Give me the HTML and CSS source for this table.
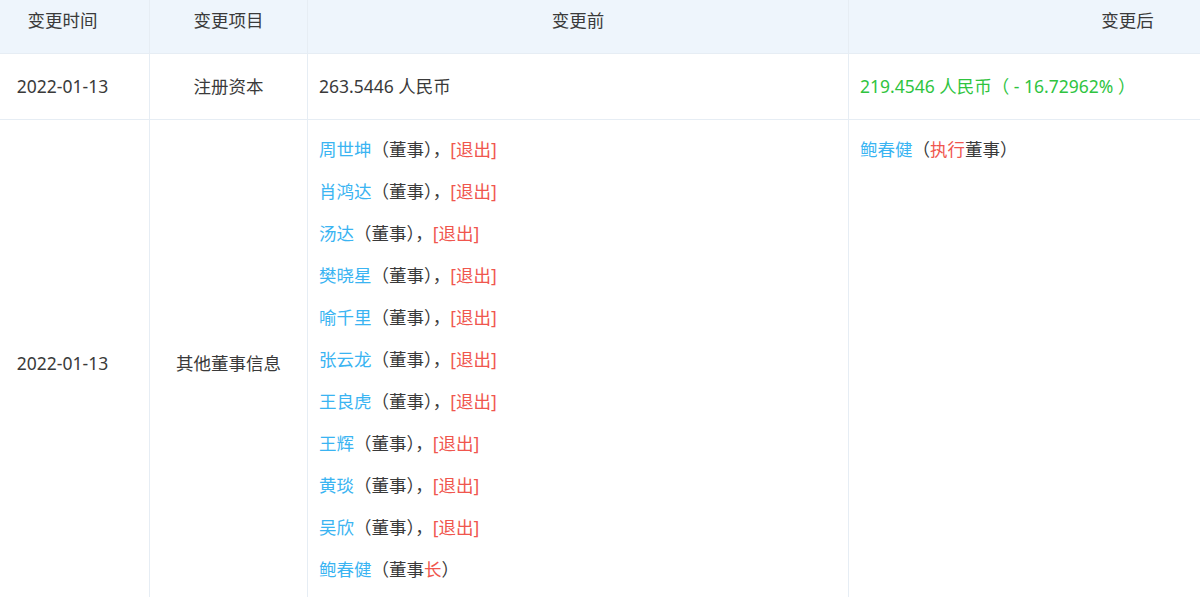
FILE: index.html
```html
<!DOCTYPE html>
<html lang="zh-CN">
<head>
<meta charset="utf-8">
<title>变更记录</title>
<link rel="stylesheet" href="styles.css">
</head>
<body>
<div class="viewport">
  <table class="changes">
    <colgroup>
      <col class="c-time">
      <col class="c-item">
      <col class="c-before">
      <col class="c-after">
    </colgroup>
    <thead>
      <tr>
        <th>变更时间</th>
        <th>变更项目</th>
        <th>变更前</th>
        <th>变更后</th>
      </tr>
    </thead>
    <tbody>
      <tr>
        <td class="mid">2022-01-13</td>
        <td class="mid">注册资本</td>
        <td class="txt">263.5446 人民币</td>
        <td class="txt green">219.4546 人民币（ - 16.72962% ）</td>
      </tr>
      <tr>
        <td class="mid">2022-01-13</td>
        <td class="mid">其他董事信息</td>
        <td class="txt list">
          <div class="line"><span class="name">周世坤</span>（董事），<span class="red">[退出]</span></div>
          <div class="line"><span class="name">肖鸿达</span>（董事），<span class="red">[退出]</span></div>
          <div class="line"><span class="name">汤达</span>（董事），<span class="red">[退出]</span></div>
          <div class="line"><span class="name">樊晓星</span>（董事），<span class="red">[退出]</span></div>
          <div class="line"><span class="name">喻千里</span>（董事），<span class="red">[退出]</span></div>
          <div class="line"><span class="name">张云龙</span>（董事），<span class="red">[退出]</span></div>
          <div class="line"><span class="name">王良虎</span>（董事），<span class="red">[退出]</span></div>
          <div class="line"><span class="name">王辉</span>（董事），<span class="red">[退出]</span></div>
          <div class="line"><span class="name">黄琰</span>（董事），<span class="red">[退出]</span></div>
          <div class="line"><span class="name">吴欣</span>（董事），<span class="red">[退出]</span></div>
          <div class="line"><span class="name">鲍春健</span>（董事<span class="red">长</span>）</div>
        </td>
        <td class="txt list">
          <div class="line"><span class="name">鲍春健</span>（<span class="red">执行</span>董事）</div>
        </td>
      </tr>
    </tbody>
  </table>
</div>
</body>
</html>
```

FILE: styles.css
```css
html, body {
  margin: 0;
  padding: 0;
  background: #ffffff;
}

.viewport {
  width: 1200px;
  height: 597px;
  overflow: hidden;
}

.changes {
  border-collapse: collapse;
  table-layout: fixed;
  width: 1431px;
  margin: -11px 0 0 -25px;
  font-family: "Noto Sans", "Noto Sans CJK SC", sans-serif;
  font-size: 17.5px;
  color: #3a3a3a;
}

.c-time { width: 174px; }
.c-item { width: 158px; }
.c-before { width: 541px; }
.c-after { width: 558px; }

.changes th,
.changes td {
  border: 1px solid #e6edf4;
  font-weight: normal;
}

.changes th {
  background: #eef5fc;
  padding: 9px 0 12px;
  line-height: 42px;
  text-align: center;
}

.changes td {
  padding: 11px 11px 12px;
  line-height: 42px;
}

.mid {
  text-align: center;
  vertical-align: middle;
}

.txt {
  text-align: left;
  vertical-align: top;
}

.changes td.list {
  padding-top: 12px;
}

.list .line {
  line-height: 34px;
  margin-bottom: 8px;
}

.name { color: #3ab4f2; }
.red { color: #f0564e; }
.green { color: #2fc43f; }
```
